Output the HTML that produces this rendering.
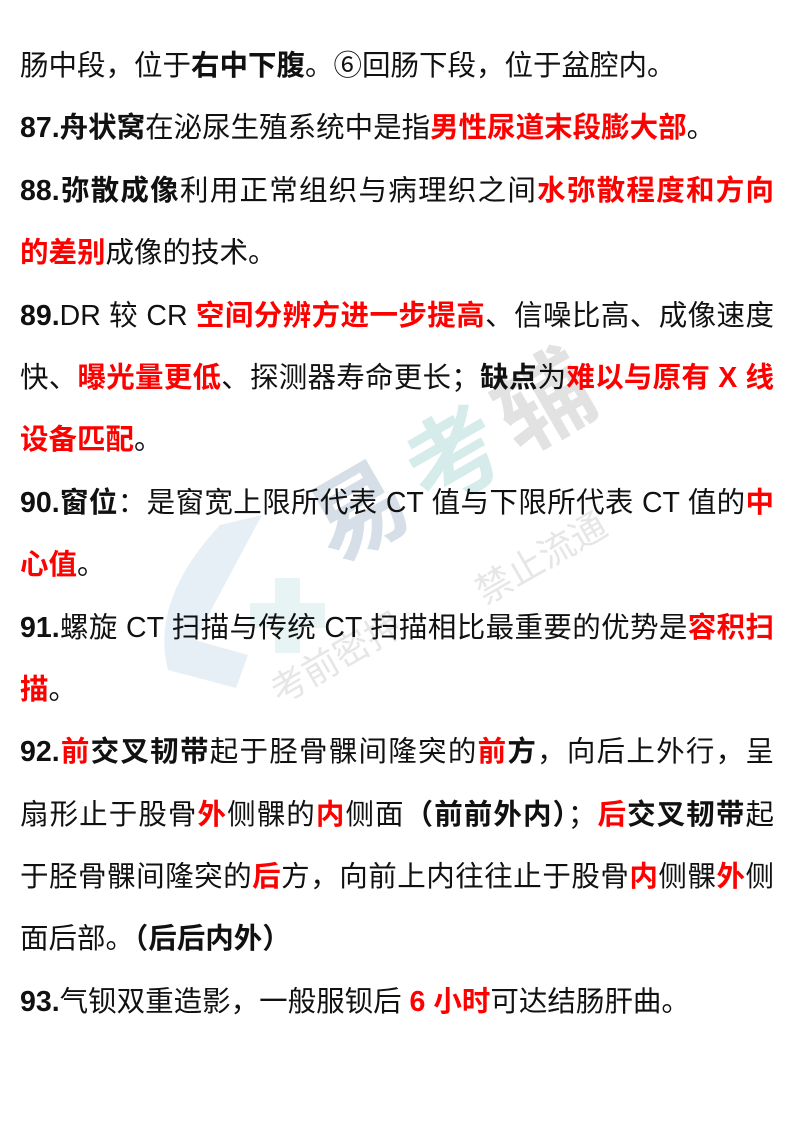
<!DOCTYPE html>
<html><head><meta charset="utf-8"><style>
html,body{margin:0;padding:0;background:#fff;}
body{width:794px;height:1123px;position:relative;overflow:hidden;font-family:"Liberation Sans","Noto Sans CJK SC",sans-serif;font-size:28.5px;color:#111;}
.wrap{position:absolute;left:20px;top:35px;width:754px;z-index:2;}
.l{height:62.4px;line-height:62.4px;white-space:nowrap;}
.j{text-align:justify;text-align-last:justify;}
b{font-weight:bold;color:#111;}
.r{color:#f00;font-weight:bold;}
.wm{position:absolute;z-index:1;}
</style></head><body>
<svg class="wm" style="left:0;top:0" width="794" height="1123">
<g opacity="0.35">
<path d="M220 525 L262 515 L195 640 L248 655 L236 688 L168 670 Q150 600 220 525Z" fill="#b9d4e4"/>
<path d="M275 578 h25 v25 h25 v25 h-25 v25 h-25 v-25 h-25 v-25 h25z" fill="#bfe0e0"/>
</g>
<text x="335" y="565" font-size="95" fill="#d6dfe8" transform="rotate(-30 335 565)" font-family="Noto Sans CJK SC" font-weight="bold">易</text>
<text x="430" y="510" font-size="95" fill="#d5ecea" transform="rotate(-30 430 510)" font-family="Noto Sans CJK SC" font-weight="bold">考</text>
<text x="520" y="455" font-size="95" fill="#e2e2e2" transform="rotate(-30 520 455)" font-family="Noto Sans CJK SC" font-weight="bold">辅</text>
<text x="485" y="605" font-size="36" fill="#e6e6e6" transform="rotate(-30 485 605)" font-family="Noto Sans CJK SC">禁止流通</text>
<text x="280" y="705" font-size="36" fill="#e6e6e6" transform="rotate(-30 280 705)" font-family="Noto Sans CJK SC">考前密押</text>
</svg>
<div class="wrap">
<div class="l">肠中段，位于<b>右中下腹</b>。⑥回肠下段，位于盆腔内。</div>
<div class="l"><b>87.舟状窝</b>在泌尿生殖系统中是指<span class="r">男性尿道末段膨大部</span>。</div>
<div class="l j"><b>88.弥散成像</b>利用正常组织与病理织之间<span class="r">水弥散程度和方向</span></div>
<div class="l"><span class="r">的差别</span>成像的技术。</div>
<div class="l j"><b>89.</b>DR 较 CR <span class="r">空间分辨方进一步提高</span>、信噪比高、成像速度</div>
<div class="l j">快、<span class="r">曝光量更低</span>、探测器寿命更长；<b>缺点</b>为<span class="r">难以与原有 X 线</span></div>
<div class="l"><span class="r">设备匹配</span>。</div>
<div class="l j"><b>90.窗位</b>：是窗宽上限所代表 CT 值与下限所代表 CT 值的<span class="r">中</span></div>
<div class="l"><span class="r">心值</span>。</div>
<div class="l j"><b>91.</b>螺旋 CT 扫描与传统 CT 扫描相比最重要的优势是<span class="r">容积扫</span></div>
<div class="l"><span class="r">描</span>。</div>
<div class="l j"><b>92.</b><span class="r">前</span><b>交叉韧带</b>起于胫骨髁间隆突的<span class="r">前</span><b>方</b>，向后上外行，呈</div>
<div class="l j">扇形止于股骨<span class="r">外</span>侧髁的<span class="r">内</span>侧面<b>（前前外内）</b>；<span class="r">后</span><b>交叉韧带</b>起</div>
<div class="l j">于胫骨髁间隆突的<span class="r">后</span>方，向前上内往往止于股骨<span class="r">内</span>侧髁<span class="r">外</span>侧</div>
<div class="l">面后部。<b>（后后内外）</b></div>
<div class="l"><b>93.</b>气钡双重造影，一般服钡后 <span class="r">6 小时</span>可达结肠肝曲。</div>
</div>
</body></html>
